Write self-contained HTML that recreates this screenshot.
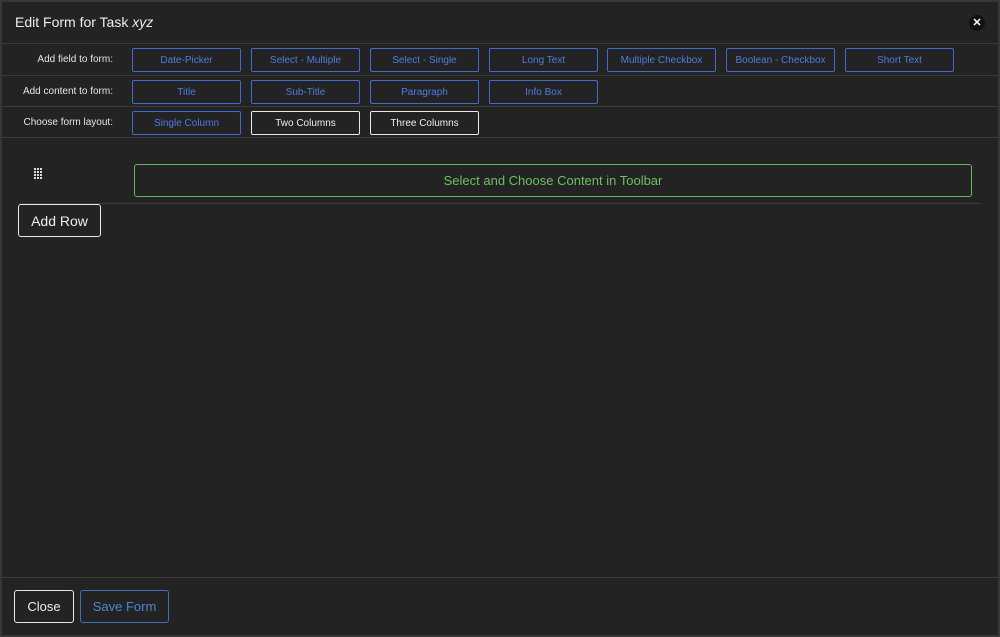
<!DOCTYPE html>
<html><head><style>
*{box-sizing:border-box;margin:0;padding:0}
body{width:1000px;height:637px;background:#232323;font-family:"Liberation Sans",sans-serif;position:relative;overflow:hidden;color:#fff}
.frame{position:absolute;left:0;top:0;width:1000px;height:637px;border:2px solid #383838}
.hl{position:absolute;left:2px;right:2px;height:1px;background:#3c3c3c}
.t{position:absolute;font-size:14px}
.lbl{position:absolute;font-size:10px;color:#e6e6e6;text-align:right;width:113px;left:0;line-height:12px}
.b{position:absolute;width:109px;height:24px;border:1px solid #4169d0;border-radius:2px;color:#4f7be0;font-size:10px;display:flex;align-items:center;justify-content:center}
.w{border-color:#e8e8e8;color:#eee}
</style></head><body>
<div class="frame"></div>
<div class="t" style="left:15px;top:14px;color:#eee">Edit Form for Task <i>xyz</i></div>
<div style="position:absolute;left:969px;top:15px;width:16px;height:16px;border-radius:50%;background:#111;color:#fff;font-size:11px;font-weight:bold;text-align:center;line-height:16px">✕</div>
<div class="hl" style="top:43px"></div>
<div class="hl" style="top:75px"></div>
<div class="hl" style="top:106px"></div>
<div class="hl" style="top:137px"></div>
<div class="lbl" style="top:54px">Add field to form:</div>
<div class="lbl" style="top:86px">Add content to form:</div>
<div class="lbl" style="top:117px">Choose form layout:</div>
<div class="b" style="left:132px;top:48px">Date-Picker</div>
<div class="b" style="left:251px;top:48px">Select - Multiple</div>
<div class="b" style="left:370px;top:48px">Select - Single</div>
<div class="b" style="left:489px;top:48px">Long Text</div>
<div class="b" style="left:607px;top:48px">Multiple Checkbox</div>
<div class="b" style="left:726px;top:48px">Boolean - Checkbox</div>
<div class="b" style="left:845px;top:48px">Short Text</div>
<div class="b" style="left:132px;top:80px">Title</div>
<div class="b" style="left:251px;top:80px">Sub-Title</div>
<div class="b" style="left:370px;top:80px">Paragraph</div>
<div class="b" style="left:489px;top:80px">Info Box</div>
<div class="b" style="left:132px;top:111px">Single Column</div>
<div class="b w" style="left:251px;top:111px">Two Columns</div>
<div class="b w" style="left:370px;top:111px">Three Columns</div>
<svg style="position:absolute;left:33px;top:167px" width="10" height="14" fill="#ddd">
<g><rect x="1" y="1" width="2" height="2"/><rect x="4" y="1" width="2" height="2"/><rect x="7" y="1" width="2" height="2"/>
<rect x="1" y="4" width="2" height="2"/><rect x="4" y="4" width="2" height="2"/><rect x="7" y="4" width="2" height="2"/>
<rect x="1" y="7" width="2" height="2"/><rect x="4" y="7" width="2" height="2"/><rect x="7" y="7" width="2" height="2"/>
<rect x="1" y="10" width="2" height="2"/><rect x="4" y="10" width="2" height="2"/><rect x="7" y="10" width="2" height="2"/></g></svg>
<div style="position:absolute;left:134px;top:164px;width:838px;height:33px;border:1px solid #62b85a;border-radius:3px;color:#6cbf62;font-size:13px;display:flex;align-items:center;justify-content:center">Select and Choose Content in Toolbar</div>
<div style="position:absolute;left:18px;top:203px;width:963px;height:1px;background:#3a3a3a"></div>
<div style="position:absolute;left:18px;top:204px;width:83px;height:33px;border:1px solid #e8e8e8;border-radius:3px;font-size:14px;display:flex;align-items:center;justify-content:center;color:#eee">Add Row</div>
<div class="hl" style="top:577px"></div>
<div style="position:absolute;left:14px;top:590px;width:60px;height:33px;border:1px solid #e8e8e8;border-radius:3px;font-size:13px;display:flex;align-items:center;justify-content:center;color:#eee">Close</div>
<div style="position:absolute;left:80px;top:590px;width:89px;height:33px;border:1px solid #3f6fb5;border-radius:3px;font-size:13px;display:flex;align-items:center;justify-content:center;color:#4f86d0">Save Form</div>
</body></html>
